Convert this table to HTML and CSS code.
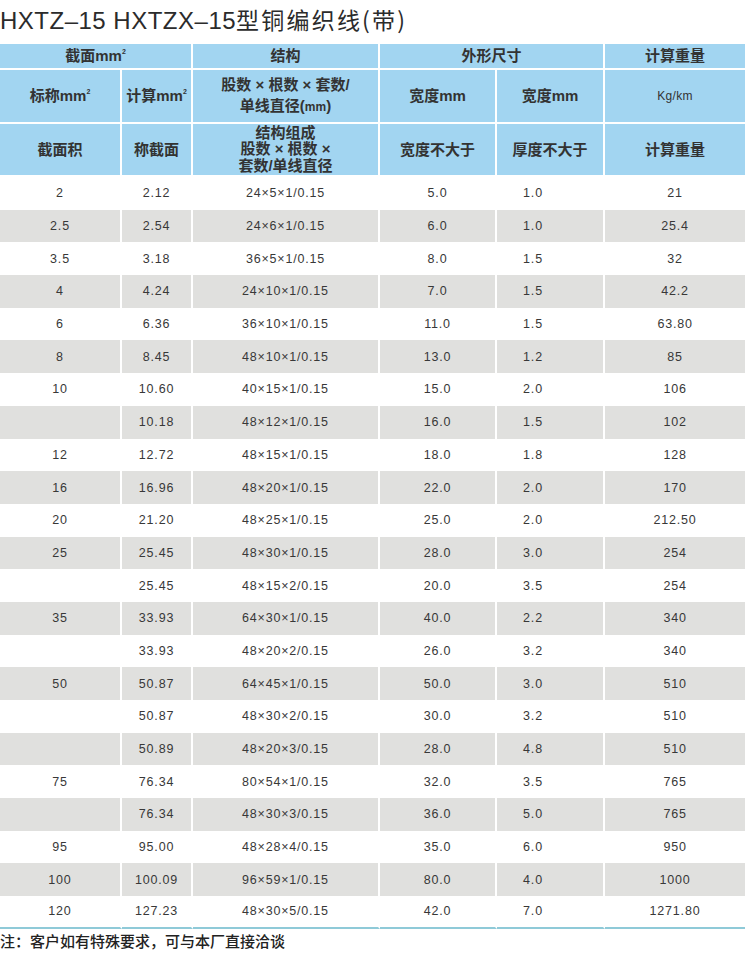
FILE: index.html
```html
<!DOCTYPE html>
<html lang="zh">
<head>
<meta charset="utf-8">
<title>HXTZ-15 HXTZX-15型铜编织线(带)</title>
<link rel="stylesheet" href="styles.css">
</head>
<body>
<h1 class="title"><span class="title-latin">HXTZ–15 HXTZX–15</span><span class="title-cjk">型铜编织线(带)</span></h1>
<table class="spec">
  <colgroup>
    <col class="c1"><col class="c2"><col class="c3"><col class="c4"><col class="c5"><col class="c6">
  </colgroup>
  <thead>
    <tr class="h1">
      <th colspan="2">截面mm<sup>2</sup></th>
      <th>结构</th>
      <th colspan="2">外形尺寸</th>
      <th class="last">计算重量</th>
    </tr>
    <tr class="h2">
      <th>标称mm<sup>2</sup></th>
      <th>计算mm<sup>2</sup></th>
      <th class="two">股数 × 根数 × 套数/<br>单线直径(<span class="small">mm</span>)</th>
      <th>宽度mm</th>
      <th>宽度mm</th>
      <th class="last unit">Kg/km</th>
    </tr>
    <tr class="h3">
      <th>截面积</th>
      <th>称截面</th>
      <th class="three">结构组成<br>股数 × 根数 ×<br>套数/单线直径</th>
      <th>宽度不大于</th>
      <th>厚度不大于</th>
      <th class="last">计算重量</th>
    </tr>
  </thead>
  <tbody>
    <tr><td>2</td><td>2.12</td><td>24×5×1/0.15</td><td>5.0</td><td class="th">1.0</td><td>21</td></tr>
    <tr><td>2.5</td><td>2.54</td><td>24×6×1/0.15</td><td>6.0</td><td class="th">1.0</td><td>25.4</td></tr>
    <tr><td>3.5</td><td>3.18</td><td>36×5×1/0.15</td><td>8.0</td><td class="th">1.5</td><td>32</td></tr>
    <tr><td>4</td><td>4.24</td><td>24×10×1/0.15</td><td>7.0</td><td class="th">1.5</td><td>42.2</td></tr>
    <tr><td>6</td><td>6.36</td><td>36×10×1/0.15</td><td>11.0</td><td class="th">1.5</td><td>63.80</td></tr>
    <tr><td>8</td><td>8.45</td><td>48×10×1/0.15</td><td>13.0</td><td class="th">1.2</td><td>85</td></tr>
    <tr><td>10</td><td>10.60</td><td>40×15×1/0.15</td><td>15.0</td><td class="th">2.0</td><td>106</td></tr>
    <tr><td></td><td>10.18</td><td>48×12×1/0.15</td><td>16.0</td><td class="th">1.5</td><td>102</td></tr>
    <tr><td>12</td><td>12.72</td><td>48×15×1/0.15</td><td>18.0</td><td class="th">1.8</td><td>128</td></tr>
    <tr><td>16</td><td>16.96</td><td>48×20×1/0.15</td><td>22.0</td><td class="th">2.0</td><td>170</td></tr>
    <tr><td>20</td><td>21.20</td><td>48×25×1/0.15</td><td>25.0</td><td class="th">2.0</td><td>212.50</td></tr>
    <tr><td>25</td><td>25.45</td><td>48×30×1/0.15</td><td>28.0</td><td class="th">3.0</td><td>254</td></tr>
    <tr><td></td><td>25.45</td><td>48×15×2/0.15</td><td>20.0</td><td class="th">3.5</td><td>254</td></tr>
    <tr><td>35</td><td>33.93</td><td>64×30×1/0.15</td><td>40.0</td><td class="th">2.2</td><td>340</td></tr>
    <tr><td></td><td>33.93</td><td>48×20×2/0.15</td><td>26.0</td><td class="th">3.2</td><td>340</td></tr>
    <tr><td>50</td><td>50.87</td><td>64×45×1/0.15</td><td>50.0</td><td class="th">3.0</td><td>510</td></tr>
    <tr><td></td><td>50.87</td><td>48×30×2/0.15</td><td>30.0</td><td class="th">3.2</td><td>510</td></tr>
    <tr><td></td><td>50.89</td><td>48×20×3/0.15</td><td>28.0</td><td class="th">4.8</td><td>510</td></tr>
    <tr><td>75</td><td>76.34</td><td>80×54×1/0.15</td><td>32.0</td><td class="th">3.5</td><td>765</td></tr>
    <tr><td></td><td>76.34</td><td>48×30×3/0.15</td><td>36.0</td><td class="th">5.0</td><td>765</td></tr>
    <tr><td>95</td><td>95.00</td><td>48×28×4/0.15</td><td>35.0</td><td class="th">6.0</td><td>950</td></tr>
    <tr><td>100</td><td>100.09</td><td>96×59×1/0.15</td><td>80.0</td><td class="th">4.0</td><td>1000</td></tr>
    <tr><td>120</td><td>127.23</td><td>48×30×5/0.15</td><td>42.0</td><td class="th">7.0</td><td>1271.80</td></tr>
  </tbody>
</table>
<p class="note">注：客户如有特殊要求，可与本厂直接洽谈</p>
</body>
</html>
```

FILE: styles.css
```css
html, body {
  margin: 0;
  padding: 0;
  background: #ffffff;
}

body {
  width: 745px;
  font-family: "Liberation Sans", "Noto Sans CJK SC", sans-serif;
  color: #333333;
}

.title {
  margin: 0;
  height: 44px;
  padding: 0;
  box-sizing: border-box;
  font-weight: normal;
  color: #2b2b2b;
  line-height: 36px;
  white-space: nowrap;
}

.title-latin {
  font-size: 24px;
  letter-spacing: 0.5px;
}

.title-cjk {
  font-size: 23px;
  letter-spacing: 2.2px;
  font-family: "Noto Sans CJK SC", sans-serif;
}

.spec {
  width: 745px;
  table-layout: fixed;
  border-collapse: separate;
  border-spacing: 0;
}

.c1 { width: 122px; }
.c2 { width: 71px; }
.c3 { width: 187px; }
.c4 { width: 117px; }
.c5 { width: 108px; }
.c6 { width: 140px; }

.spec th {
  background: #a2d5f1;
  border-right: 2px solid #ffffff;
  border-bottom: 2px solid #ffffff;
  padding: 0;
  font-size: 15px;
  font-weight: bold;
  color: #333333;
  text-align: center;
  vertical-align: middle;
  line-height: 18px;
}

.spec th.last {
  border-right: none;
}

.spec sup {
  font-size: 7px;
  vertical-align: 7px;
  line-height: 0;
}

.h1 { height: 26px; }
.h2 { height: 54px; }
.h3 { height: 53px; }

.spec th.two { line-height: 21px; }
.spec th.three { line-height: 16.5px; }

.spec .small {
  font-size: 12px;
}

.spec th.unit {
  font-size: 12px;
  font-weight: normal;
  letter-spacing: 0.3px;
}

.spec tbody tr {
  height: 32.7px;
}

.spec td {
  padding: 0;
  border-right: 2px solid #ffffff;
  text-align: center;
  vertical-align: middle;
  font-size: 12.5px;
  letter-spacing: 0.8px;
  color: #383838;
}

.spec td:last-child {
  border-right: none;
}

.spec td.th {
  padding-right: 34px;
}

.spec tbody tr:nth-child(even) td {
  background: #e0e0de;
}

.spec tbody tr:last-child td {
  border-bottom: 2px solid #8fcad8;
}

.note {
  margin: 0;
  padding-left: 0;
  font-size: 15px;
  font-weight: 500;
  line-height: 24px;
  color: #222222;
  font-family: "Noto Sans CJK SC", sans-serif;
}
```
